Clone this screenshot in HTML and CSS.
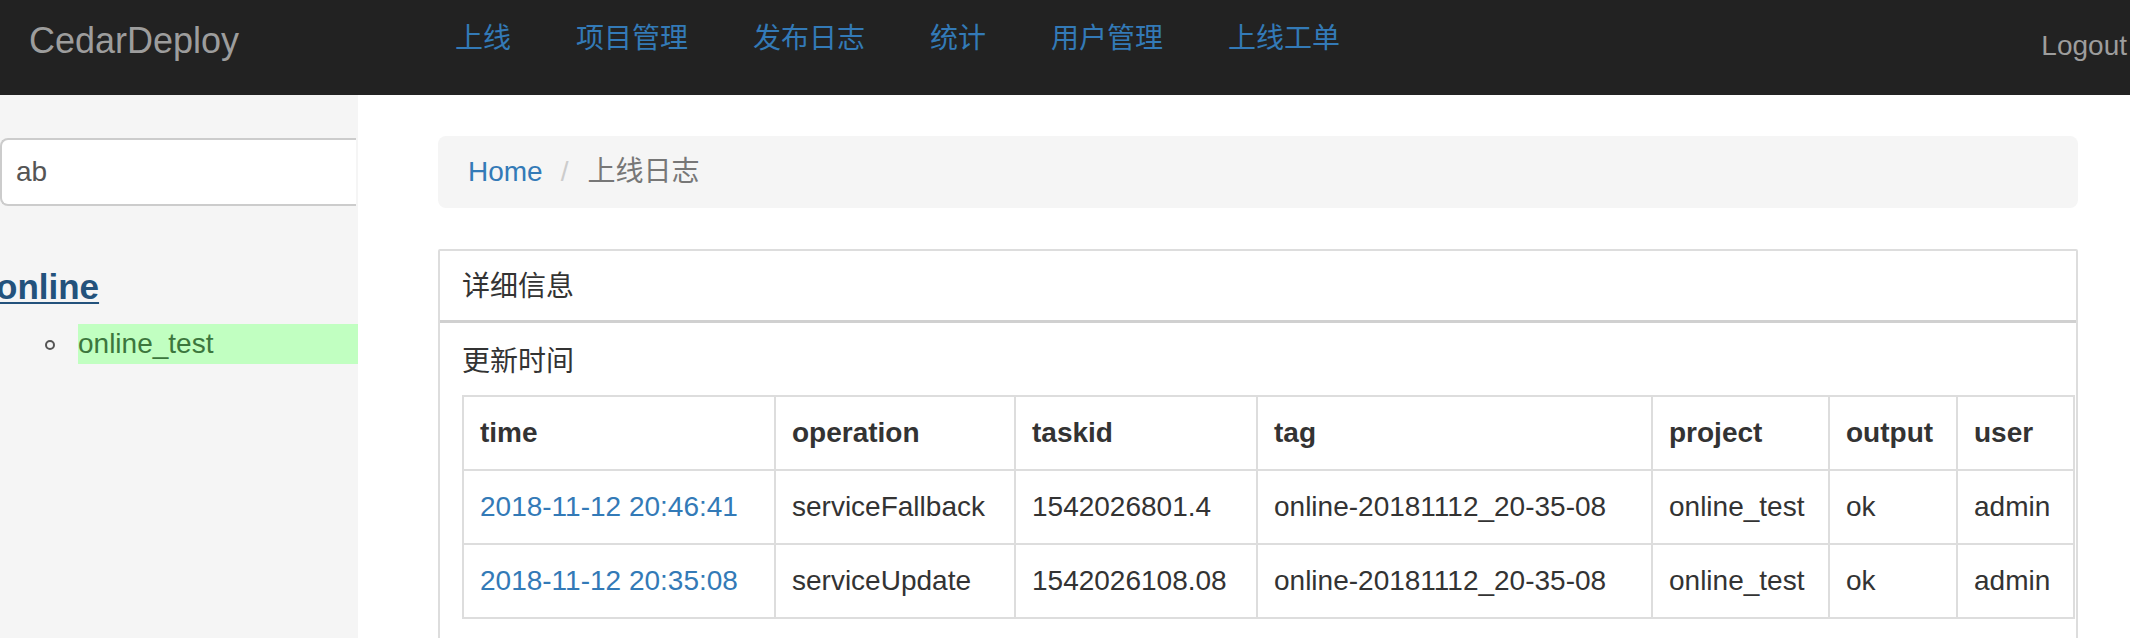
FILE: index.html
```html
<!DOCTYPE html>
<html lang="zh">
<head>
<meta charset="utf-8">
<title>CedarDeploy</title>
<link rel="stylesheet" href="styles.css">
</head>
<body>
<nav class="navbar">
  <a class="brand" href="#">CedarDeploy</a>
  <ul class="nav">
    <li><a href="#">上线</a></li>
    <li><a href="#">项目管理</a></li>
    <li><a href="#">发布日志</a></li>
    <li><a href="#">统计</a></li>
    <li><a href="#">用户管理</a></li>
    <li><a href="#">上线工单</a></li>
  </ul>
  <a class="logout" href="#">Logout</a>
</nav>
<div class="layout">
  <aside class="sidebar">
    <input class="search" type="text" value="ab">
    <a class="group" href="#">online</a>
    <ul class="projects">
      <li class="project"><span class="dot"></span><span class="project-name">online_test</span></li>
    </ul>
  </aside>
  <main class="main">
    <ol class="breadcrumb">
      <li><a href="#">Home</a></li>
      <li class="sep">/</li>
      <li class="active">上线日志</li>
    </ol>
    <div class="panel">
      <div class="panel-heading">详细信息</div>
      <div class="panel-body">
        <div class="section-label">更新时间</div>
        <table class="log-table">
          <colgroup>
            <col class="c-time"><col class="c-op"><col class="c-task"><col class="c-tag"><col class="c-proj"><col class="c-out"><col class="c-user">
          </colgroup>
          <thead>
            <tr><th>time</th><th>operation</th><th>taskid</th><th>tag</th><th>project</th><th>output</th><th>user</th></tr>
          </thead>
          <tbody>
            <tr><td><a href="#">2018-11-12 20:46:41</a></td><td>serviceFallback</td><td>1542026801.4</td><td>online-20181112_20-35-08</td><td>online_test</td><td>ok</td><td>admin</td></tr>
            <tr><td><a href="#">2018-11-12 20:35:08</a></td><td>serviceUpdate</td><td>1542026108.08</td><td>online-20181112_20-35-08</td><td>online_test</td><td>ok</td><td>admin</td></tr>
          </tbody>
        </table>
      </div>
    </div>
  </main>
</div>
</body>
</html>
```
FILE: styles.css
```css
* { box-sizing: border-box; }
html, body { margin: 0; padding: 0; }
body {
  font-family: "Liberation Sans", "Noto Sans CJK SC", sans-serif;
  font-size: 28px;
  line-height: 40px;
  color: #333;
  background: #fff;
  overflow: hidden;
}
a { text-decoration: none; color: #337ab7; }

.navbar {
  display: flex;
  align-items: flex-start;
  height: 95px;
  background: #222;
}
.brand {
  flex: 0 0 455px;
  padding: 21px 0 0 29px;
  font-size: 36px;
  line-height: 40px;
  color: #9d9d9d;
}
.nav {
  display: flex;
  gap: 65px;
  margin: 0;
  padding: 19px 0 0;
  list-style: none;
}
.nav a { color: #337ab7; }
.logout {
  margin-left: auto;
  margin-right: 3px;
  padding-top: 26px;
  color: #9d9d9d;
}

.layout {
  display: flex;
  min-height: 543px;
}
.sidebar {
  flex: 0 0 358px;
  background: #f5f5f5;
  padding-top: 43px;
}
.search {
  display: block;
  width: 356px;
  height: 68px;
  margin: 0;
  border: 2px solid #ccc;
  border-right: none;
  border-radius: 8px 0 0 8px;
  padding: 0 14px;
  font-family: inherit;
  font-size: 28px;
  color: #555;
  background: #fff;
  outline: none;
}
.group {
  display: block;
  margin: 61px 0 0 -4px;
  font-size: 35px;
  font-weight: bold;
  line-height: 40px;
  color: #23527c;
  text-decoration: underline;
  text-decoration-thickness: 2px;
  text-underline-offset: 3px;
}
.projects {
  margin: 17px 0 0;
  padding: 0;
  list-style: none;
}
.project {
  display: flex;
  align-items: center;
}
.dot {
  flex: 0 0 10px;
  width: 10px;
  height: 10px;
  margin: 2px 23px 0 45px;
  border: 2px solid #555;
  border-radius: 50%;
}
.project-name {
  flex: 1;
  background: #c1ffc1;
  color: #3c763d;
  line-height: 40px;
}

.main {
  flex: 1;
  padding: 41px 52px 0 80px;
}
.breadcrumb {
  display: flex;
  margin: 0 0 41px;
  padding: 16px 30px;
  list-style: none;
  background: #f5f5f5;
  border-radius: 8px;
}
.breadcrumb .sep {
  color: #ccc;
  padding: 0 19px 0 18px;
}
.breadcrumb .active { color: #777; }

.panel {
  border: 2px solid #ddd;
  border-radius: 2px;
  background: #fff;
}
.panel-heading {
  padding: 16px 22px 13px;
  border-bottom: 3px solid #d0d0d0;
  color: #333;
}
.panel-body {
  padding: 19px 1px 40px 22px;
}
.section-label {
  margin-bottom: 13px;
}
.log-table {
  width: 100%;
  border-collapse: collapse;
  table-layout: fixed;
}
.c-time { width: 312px; }
.c-op { width: 240px; }
.c-task { width: 242px; }
.c-tag { width: 395px; }
.c-proj { width: 177px; }
.c-out { width: 128px; }
.log-table th,
.log-table td {
  border: 2px solid #ddd;
  padding: 16px 16px;
  text-align: left;
  white-space: nowrap;
  overflow: hidden;
}
.log-table th { font-weight: bold; }
```
